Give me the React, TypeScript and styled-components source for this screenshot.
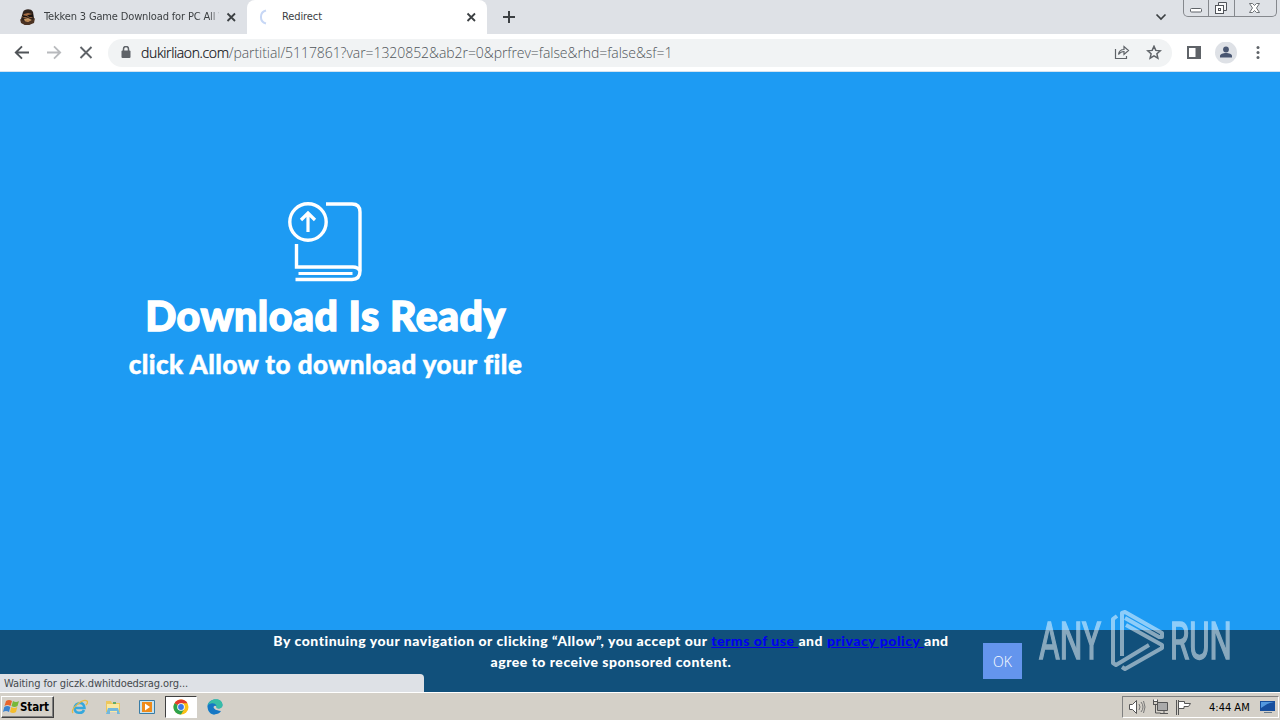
import type { ReactNode } from 'react';
import styled, { createGlobalStyle } from 'styled-components';

const GlobalStyle = createGlobalStyle`
  * { box-sizing: border-box; }
  body { margin: 0; overflow: hidden; }
  svg { display: block; flex: none; }
`;

const uiFont = '"DejaVu Sans Condensed", "DejaVu Sans", sans-serif';

const Screen = styled.div`
  width: 1280px;
  height: 720px;
  display: flex;
  flex-direction: column;
  position: relative;
  overflow: hidden;
  font-family: ${uiFont};
  background: #1d9bf3;
`;

const Line = styled.span<{ $size: number; $spacing?: number }>`
  font-size: ${p => p.$size}px;
  letter-spacing: ${p => p.$spacing || 0}px;
  white-space: nowrap;
`;

const TabStrip = styled.header`
  height: 34px;
  flex: none;
  display: flex;
  background: #dee1e6;
  color: #3c4043;
`;

const Tab = styled.div<{ $active?: boolean }>`
  width: ${p => (p.$active ? 240 : 247)}px;
  height: 34px;
  display: flex;
  align-items: center;
  padding: 0 10px 0 ${p => (p.$active ? 9 : 20)}px;
  border-radius: 8px 8px 0 0;
  background: ${p => (p.$active ? '#fff' : 'transparent')};
`;

const TabTitle = styled.div<{ $faded?: boolean }>`
  flex: 1;
  min-width: 0;
  margin: 0 7px 0 ${p => (p.$faded ? 8 : 10)}px;
  line-height: 16px;
  display: flex;
  ${p => p.$faded && 'mask-image: linear-gradient(to right, #000 165px, transparent 179px);'}
`;

const NewTab = styled.div`
  padding: 10px 0 0 15px;
`;

const WindowControls = styled.div`
  margin-left: auto;
  display: flex;
`;

const Chevron = styled.div`
  padding: 13px 16px 0 0;
`;

const Buttons = styled.div`
  display: flex;
  width: 94px;
  height: 17px;
  margin-right: 3px;
  border: 1px solid #85888d;
  border-top: 0;
  border-radius: 0 0 5px 5px;
`;

const WindowButton = styled.div<{ $width: number }>`
  width: ${p => p.$width}px;
  display: flex;
  justify-content: center;
  & + & { border-left: 1px solid #85888d; }
`;

const Toolbar = styled.div`
  height: 38px;
  flex: none;
  display: flex;
  align-items: center;
  background: #fff;
  border-bottom: 1px solid #d3e3f0;
`;

const NavButtons = styled.div`
  width: 108px;
  display: flex;
  gap: 16px;
  padding-left: 14px;
`;

const AddressBar = styled.div`
  width: 1064px;
  height: 28px;
  display: flex;
  align-items: center;
  padding: 0 10px 0 12px;
  border-radius: 14px;
  background: #f1f3f4;
`;

const Url = styled.div`
  flex: 1;
  margin-left: 9px;
  font-family: "Open Sans", sans-serif;
  font-weight: 300;
  color: #50555a;
  line-height: 20px;
`;

const Domain = styled.span`
  color: #101114;
  letter-spacing: -0.36px;
  -webkit-text-stroke: 0.2px #101114;
`;

const AddressActions = styled.div`
  display: flex;
  gap: 16px;
`;

const ToolbarActions = styled.div`
  display: flex;
  align-items: center;
  gap: 12px;
  padding-left: 13px;
`;

const Page = styled.main`
  flex: 1;
  display: flex;
  flex-direction: column;
  justify-content: space-between;
  font-family: Lato, sans-serif;
  color: #fff;
`;

const Hero = styled.section`
  width: 651px;
  padding-top: 129px;
  display: flex;
  flex-direction: column;
  align-items: center;
`;

const Title = styled.h1`
  margin: 7px 0 0;
  font-weight: 900;
  line-height: 52px;
  -webkit-text-stroke: 1.4px #fff;
`;

const Subtitle = styled.h2`
  margin: 3px 0 0;
  font-weight: 900;
  line-height: 32px;
  -webkit-text-stroke: 0.5px #fff;
`;

const Consent = styled.section`
  height: 62px;
  display: flex;
  background: #11507b;
`;

const ConsentText = styled.div`
  width: 722px;
  margin-left: 250px;
  text-align: center;
  font-weight: 900;
  line-height: 21px;
  font-size: 14px;
  a { color: #0000ee; text-decoration: underline; }
`;

const OkButton = styled.button`
  width: 39px;
  height: 36px;
  margin: 13px 0 0 11px;
  padding: 0;
  border: 0;
  background: #6495ed;
  color: #fff;
  font: 300 14px "Open Sans", sans-serif;
`;

const StatusBubble = styled.div`
  position: absolute;
  left: 0;
  top: 674px;
  width: 424px;
  height: 18px;
  padding-left: 4px;
  border-radius: 0 4px 0 0;
  background: #dee1e6;
  color: #45494d;
  line-height: 16px;
`;

const Watermark = styled.div`
  position: absolute;
  left: 1039px;
  top: 608px;
  width: 195px;
  height: 66px;
  display: flex;
  opacity: 0.5;
  color: #fff;
  font: 400 52px/68px Roboto, sans-serif;
  -webkit-text-stroke: 1.6px #fff;
`;

const WatermarkWord = styled.span<{ $width: number; $scale: number }>`
  width: ${p => p.$width}px;
  transform: scaleX(${p => p.$scale});
  transform-origin: left;
`;

const Taskbar = styled.footer`
  height: 28px;
  flex: none;
  display: flex;
  align-items: center;
  padding: 1px 1px 0;
  border-top: 1px solid #fff;
  background: #d4d0c8;
  color: #000;
`;

const StartButton = styled.div`
  width: 53px;
  height: 22px;
  display: flex;
  align-items: center;
  padding-left: 1px;
  border: 1px solid;
  border-color: #fff #404040 #404040 #fff;
  box-shadow: inset -1px -1px #808080;
  font-weight: bold;
`;

const QuickLaunch = styled.div`
  display: flex;
  align-items: center;
  margin-left: 8px;
`;

const TaskItem = styled.div<{ $open?: boolean }>`
  width: 34px;
  height: 22px;
  display: flex;
  align-items: center;
  justify-content: center;
  ${p => p.$open && `
    width: 32px;
    margin: 0 1px;
    background: #fff;
    border: 1px solid;
    border-color: #404040 #fff #fff #404040;
  `}
`;

const Tray = styled.div`
  width: 157px;
  height: 22px;
  margin-left: auto;
  display: flex;
  align-items: center;
  padding-left: 5px;
  border: 1px solid;
  border-color: #808080 #fff #fff #808080;
`;

const TrayIcons = styled.div`
  display: flex;
  gap: 7px;
  width: 81px;
`;

type IconProps = { w: number; h?: number; color?: string; stroke?: number; children: ReactNode };

const Icon = ({ w, h = w, color = '#5f6368', stroke = 2, children }: IconProps) => (
  <svg width={w} height={h} viewBox={`0 0 ${w} ${h}`} fill="none" stroke={color} strokeWidth={stroke}>
    {children}
  </svg>
);

const CloseIcon = () => (
  <Icon w={11} color="#3c4043" stroke={1.8}><path d="M1.500 1.500L9 9M9 1.500L1.500 9" /></Icon>
);

const Favicon = () => (
  <Icon w={16} stroke={0}>
    <path d="M3 3C4 0 11-1 13 3l1 6c0 4-3 7-7 7-4 0-6-3-6-6z" fill="#30231c" />
    <path d="M4 5l4-1 4 1 1 3-2 1-3-1-3 1-3-1z" fill="#a56c43" />
    <path d="M2 6l5 1 1-1 5-1v3H9L8 7 7 8H3z" fill="#19130f" />
    <path d="M4 10l4-1 4 2-2 3-4 1z" fill="#c49562" />
    <path d="M0 10l4 2 4 1 4-2 3-2-1 5-5 2H5l-4-2z" fill="#4b3222" />
    <path d="M5 11h5l-2 2z" fill="#b98450" />
  </Icon>
);

const BookIcon = () => (
  <Icon w={78} h={82} color="#fff" stroke={4}>
    <circle cx="21" cy="21" r="18.2" strokeWidth="3.4" />
    <path d="M21 31V13M14 19l7-7 7 7" strokeWidth="3.2" />
    <path d="M39 3h26q8 0 8 8v59q0 8.500-8 8.500H8.500" strokeWidth="3.4" />
    <path d="M9.500 43v23H66q5 0 7 4" strokeWidth="3.4" />
    <path d="M11.500 72.500h54" strokeWidth="3" />
  </Icon>
);

const ChromeIcon = () => (
  <Icon w={16} stroke={0}>
    <circle cx="8" cy="8" r="7.500" fill="#fbc116" />
    <path d="M8 8L1.500 4.250A7.500 7.500 0 0114.500 4.250H8z" fill="#e33b2e" />
    <path d="M1.500 4.250A7.500 7.500 0 008 15.500l3.200-5.600L8 8z" fill="#2da24c" />
    <circle cx="8" cy="8" r="3.800" fill="#fff" />
    <circle cx="8" cy="8" r="2.900" fill="#3b78e7" />
  </Icon>
);

const App = () => (
  <Screen>
    <GlobalStyle />
    <TabStrip>
      <Tab>
        <Favicon />
        <TabTitle $faded><Line $size={11} $spacing={-0.15}>Tekken 3 Game Download for PC All V</Line></TabTitle>
        <CloseIcon />
      </Tab>
      <Tab $active>
        <Icon w={16} color="#c7d7f5"><path d="M10 1.500a6.700 6.700 0 000 13" /></Icon>
        <TabTitle><Line $size={11} $spacing={-0.1}>Redirect</Line></TabTitle>
        <CloseIcon />
      </Tab>
      <NewTab><Icon w={14} color="#3c4043"><path d="M7 1v12M1 7h12" /></Icon></NewTab>
      <WindowControls>
        <Chevron><Icon w={12} h={8} color="#3c4043" stroke={1.7}><path d="M1.500 1.500L6 6l4.500-4.500" /></Icon></Chevron>
        <Buttons>
          <WindowButton $width={24}>
            <Icon w={14} h={16} stroke={1}><rect x="1.500" y="8.500" width="11" height="3.500" rx="1" fill="#fff" /></Icon>
          </WindowButton>
          <WindowButton $width={26}>
            <Icon w={14} h={16} stroke={1} color="#51545a">
              <path d="M3.500 5V2.500h8v8H9" fill="#f4f4f5" />
              <rect x=".5" y="5.500" width="8" height="8" fill="#fff" /><rect x="3.500" y="8.500" width="2" height="2" />
            </Icon>
          </WindowButton>
          <WindowButton $width={42}>
            <Icon w={13} h={16} stroke={0.9}><path d="M.5 3.500h3l2 2 2-2h3L7.500 8l3 4.500h-3l-2-2-2 2h-3L3.500 8z" fill="#fff" /></Icon>
          </WindowButton>
        </Buttons>
      </WindowControls>
    </TabStrip>

    <Toolbar>
      <NavButtons>
        <Icon w={16} color="#505458" stroke={1.9}><path d="M15 7.500H2M8 1.300L1.800 7.500 8 13.700" /></Icon>
        <Icon w={16} color="#b8babd" stroke={1.8}><path d="M1 7.500h13M8 1.300L14.200 7.500 8 13.700" /></Icon>
        <Icon w={16} stroke={1.9}><path d="M2.500 2l11 11M13.500 2l-11 11" /></Icon>
      </NavButtons>
      <AddressBar>
        <Icon w={12} h={14} stroke={1.5}><path d="M3.500 5V3a2.500 2.500 0 015 0v2" /><rect x="1.500" y="4.500" width="9" height="7.500" rx="1" fill="#5f6368" stroke="none" /></Icon>
        <Url><Line $size={14} $spacing={-0.06}><Domain>dukirliaon.com</Domain>/partitial/5117861?var=1320852&amp;ab2r=0&amp;prfrev=false&amp;rhd=false&amp;sf=1</Line></Url>
        <AddressActions>
          <Icon w={16} stroke={1.2}><path d="M1.500 4v9.500h11V11M4.500 9.500c.5-3.500 2.500-5 5.500-5V1.500l4.500 4-4.500 4v-3c-2.500 0-4 1-5.500 3z" /></Icon>
          <Icon w={16} stroke={1.5}><path d="M8 1.300l1.800 4.100 4.500.4-3.400 3 1 4.400L8 10.900l-3.900 2.300 1-4.400-3.400-3 4.500-.4z" /></Icon>
        </AddressActions>
      </AddressBar>
      <ToolbarActions>
        <Icon w={18} h={16}><path d="M3 2h12v11H3z" /><path d="M12.500 2v11" strokeWidth="4" /></Icon>
        <Icon w={22} stroke={0}><circle cx="11" cy="10.500" r="11" fill="#dee1e6" /><circle cx="11" cy="7.500" r="2.900" fill="#495671" /><path d="M5 15.500V14c0-4 12-4 12 0v1.500z" fill="#495671" /></Icon>
        <Icon w={18} h={16} stroke={0}><g fill="#5f6368"><circle cx="9" cy="2.500" r="1.500" /><circle cx="9" cy="7.500" r="1.500" /><circle cx="9" cy="12.500" r="1.500" /></g></Icon>
      </ToolbarActions>
    </Toolbar>

    <Page>
      <Hero>
        <BookIcon />
        <Title><Line $size={41} $spacing={0.5}>Download Is Ready</Line></Title>
        <Subtitle><Line $size={26} $spacing={0.48}>click Allow to download your file</Line></Subtitle>
      </Hero>
      <Consent>
        <ConsentText>
          <Line $size={14} $spacing={0.53}>By continuing your navigation or clicking “Allow”, you accept our <a>terms of use </a>and <a>privacy policy </a>and</Line>
          <br />
          <Line $size={14} $spacing={0.5}>agree to receive sponsored content.</Line>
        </ConsentText>
        <OkButton>OK</OkButton>
      </Consent>
    </Page>

    <Taskbar>
      <StartButton>
        <Icon w={17} h={16} stroke={0}>
          <path d="M3 2q3-2 6 0L7.500 7q-3-2-6 0z" fill="#e8642c" /><path d="M10 2q3 2 6 0l-1.500 5q-3 2-6 0z" fill="#78b83b" />
          <path d="M1.300 8q3-2 6 0L6 13q-3-2-6 0z" fill="#3a82d0" /><path d="M8.300 8q3 2 6 0L13 13q-3 2-6 0z" fill="#f4bd2e" />
        </Icon>
        <Line $size={11.5} $spacing={-0.1}>Start</Line>
      </StartButton>
      <QuickLaunch>
        <TaskItem>
          <Icon w={17} h={17} color="#35a8dd" stroke={2.5}>
            <path d="M4 9h9.500c0-7-9.500-6-10 0 0 6 8 6 9.500 2" /><path d="M2 14C-1 10 12-1 16 2c1 1 0 3-1 4" stroke="#e6bb44" strokeWidth="1.300" />
          </Icon>
        </TaskItem>
        <TaskItem>
          <Icon w={16} stroke={0}>
            <path d="M1 2h5l1 2h8v9H1z" fill="#edc75d" /><path d="M2 5h12v8H2z" fill="#f9e8a2" />
            <path d="M3 9h10l2 6h-3v-3H5v3H1z" fill="#73b8dc" /><path d="M8 3h3v2H8z" fill="#62ab6b" />
          </Icon>
        </TaskItem>
        <TaskItem>
          <Icon w={16} stroke={1} color="#397ca5"><path d="M.5 1.500h15v13H.5z" fill="#c9e3ee" /><rect x="3" y="3" width="10" height="10" fill="#ef8b19" stroke="none" /><path d="M6 4.500l5 3.500-5 3.500z" fill="#fff" stroke="none" /></Icon>
        </TaskItem>
        <TaskItem $open><ChromeIcon /></TaskItem>
        <TaskItem>
          <Icon w={16} stroke={0}>
            <path d="M.5 8C0-1 15-2 15.500 6c0 3-3 4-6 3 1-2-2-4-5-2-3 2-1 7 4 8.500C4 16 1 13 .5 8z" fill="#1687cd" />
            <path d="M1 6C3-1 15-2 15.500 6c0 3-3 4-6 3 1-4-5-5-8.500-3z" fill="#38bda6" />
            <path d="M.8 7C2 4 8 3 9.500 7c-4-1-5 4 4.500 5-3 5-13 5-13.200-5z" fill="#1677c4" />
          </Icon>
        </TaskItem>
      </QuickLaunch>
      <Tray>
        <TrayIcons>
          <Icon w={18} h={16} color="#555" stroke={1}><path d="M1.500 5.500h3l4-4v13l-4-4h-3z" fill="#fff" /><path d="M11 5q2 3 0 6M13 3q4 5 0 10M15.500 2q3 6 0 12" stroke="#777" /></Icon>
          <Icon w={16} color="#555" stroke={1}><path d="M4.500 3.500h10v8h-10z" fill="#aaa" /><path d="M7 14.500h8M11 12v2M2.500 5v9h5" /><path d="M.5.5v5h4v-5M.5 2.500h4v3h-4z" fill="#fff" /></Icon>
          <Icon w={17} h={16} color="#555" stroke={1}><path d="M.5 1v15M2.500 1v15" /><path d="M2.500 2.500h6v2h6l-2 3H8v2H2.500z" fill="#fff" /></Icon>
        </TrayIcons>
        <Line $size={11} $spacing={0}>4:44 AM</Line>
        <Icon w={28} h={16} stroke={0}><path d="M10 2h15v10H10z" fill="#174f9e" /><path d="M11 3h13q-7 1-13 6z" fill="#5499df" /><path d="M14 13h8v1h-8z" fill="#66798a" /></Icon>
      </Tray>
    </Taskbar>

    <StatusBubble><Line $size={11} $spacing={-0.1}>Waiting for giczk.dwhitdoedsrag.org...</Line></StatusBubble>
    <Watermark>
      <WatermarkWord $width={69} $scale={0.61}>ANY</WatermarkWord>
      <Icon w={62} h={66} color="#fff" stroke={4}>
        <path d="M9 8l-4 3v44l3 2 33-20" strokeLinejoin="round" />
        <path d="M14 48V5l3-1 37 21v4h-3L17 10" strokeLinejoin="round" />
        <path d="M18 17l36 20v3L17 61l-3-2" strokeLinejoin="round" />
      </Icon>
      <WatermarkWord $width={64} $scale={0.6}>RUN</WatermarkWord>
    </Watermark>
  </Screen>
);

export default App;
